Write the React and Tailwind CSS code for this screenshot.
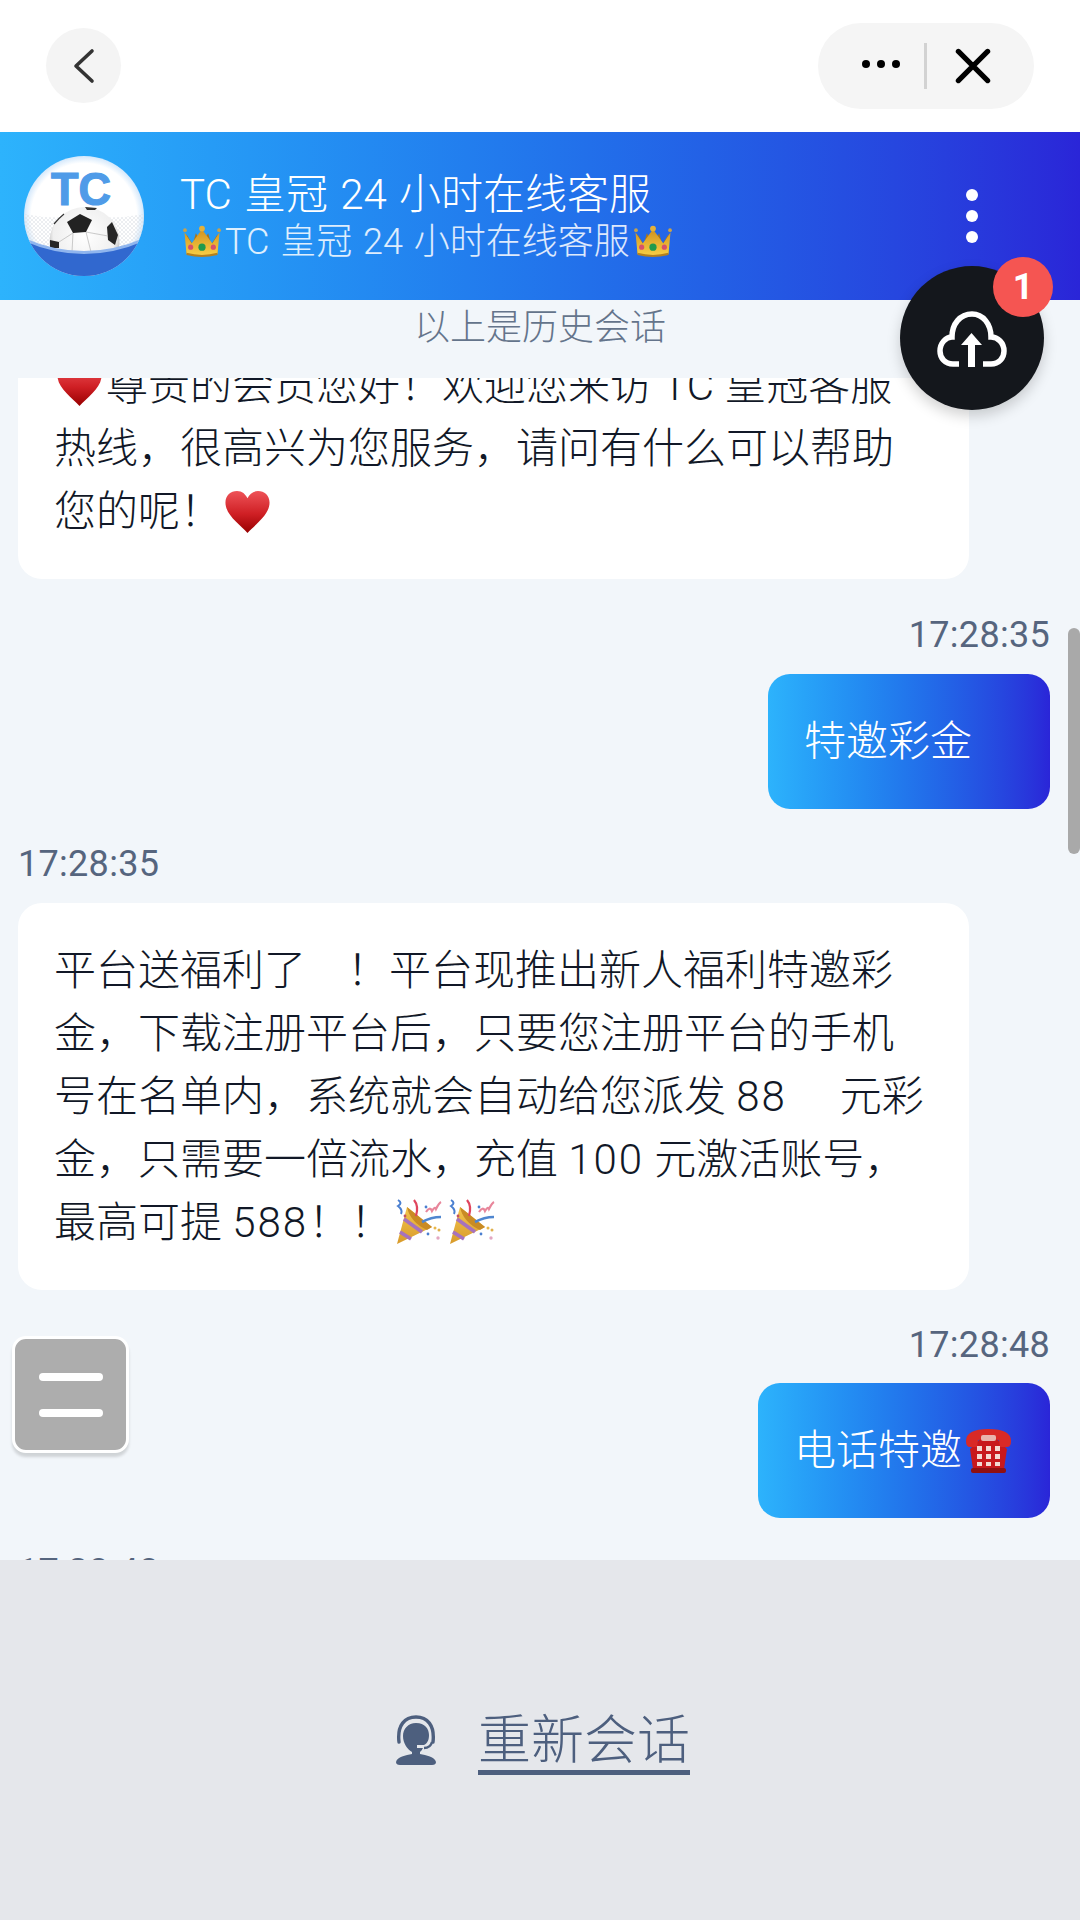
import React from 'react';

const FONT = '"Roboto", "Noto Sans CJK SC", sans-serif';

function Heart({ className }) {
  return (
    <svg viewBox="1 1 42 40" className={className}>
      <defs>
        <linearGradient id="heartFill" x1="0" y1="0" x2="0" y2="1">
          <stop offset="0" stopColor="#ee5358" />
          <stop offset="0.55" stopColor="#cf1f24" />
          <stop offset="1" stopColor="#980000" />
        </linearGradient>
      </defs>
      <path d="M22 41 C15 33 1 24 1 12 C1 5 6 1 12 1 C17 1 20 4 22 8 C24 4 27 1 32 1 C38 1 43 5 43 12 C43 24 29 33 22 41 Z" fill="url(#heartFill)" />
    </svg>
  );
}

function Crown({ className }) {
  return (
    <svg viewBox="1 0 36 32" className={className}>
      <defs>
        <linearGradient id="crownFill" x1="0" y1="0" x2="0" y2="1">
          <stop offset="0" stopColor="#d0911f" />
          <stop offset="1" stopColor="#f8cf45" />
        </linearGradient>
      </defs>
      <path d="M4 9 L10 19 L13 8 L19 17 L25 8 L28 19 L34 9 L34 27 L4 27 Z" fill="#a8751b" />
      <path d="M2 7 L9 18 L19 4 L29 18 L36 7 L34 28 Q19 32 4 28 Z" fill="url(#crownFill)" />
      <circle cx="19" cy="3.5" r="2.8" fill="#e5b13a" />
      <circle cx="2.5" cy="5" r="1.8" fill="#c9a24b" />
      <circle cx="35.5" cy="5" r="1.8" fill="#c9a24b" />
      <circle cx="19" cy="21.5" r="3.5" fill="#1f9a4d" />
      <circle cx="8" cy="21.5" r="2.5" fill="#d8506a" />
      <circle cx="30" cy="21.5" r="2.5" fill="#d8506a" />
      <path d="M4 27 Q19 31 34 27 L34 29 Q19 33 4 29 Z" fill="#b4801e" />
    </svg>
  );
}

function Popper({ className }) {
  return (
    <svg viewBox="0 0 47 47" className={className} fill="none">
      <defs>
        <linearGradient id="coneFill" x1="0" y1="0" x2="0" y2="1">
          <stop offset="0" stopColor="#f3c64e" />
          <stop offset="1" stopColor="#d89a2a" />
        </linearGradient>
      </defs>
      <path d="M2 45 L12 8 L37 28 Z" fill="url(#coneFill)" />
      <path d="M9 20 L27 33 M5 33 L16 40" stroke="#a672bd" strokeWidth="3.6" />
      <path d="M12 8 L37 28 L32 31 Q15 23 12 8 Z" fill="#c98b24" />
      <path d="M3 1 Q8 4 3 7 Q8 11 6 15" stroke="#4a7fd0" strokeWidth="2" />
      <path d="M19 1 Q24 7 21 17" stroke="#e0455d" strokeWidth="2.2" />
      <path d="M31 13 Q35 7 37 12 Q40 7 41 10 Q44 4 46 3" stroke="#e8869b" strokeWidth="2.2" />
      <path d="M27 23 Q36 18 46 18" stroke="#4f86cf" strokeWidth="2.6" />
      <circle cx="31" cy="8" r="1.4" fill="#4a7fd0" />
      <circle cx="10" cy="17" r="1.4" fill="#c7505f" />
      <circle cx="40" cy="29" r="1.5" fill="#e8b74a" />
      <circle cx="44" cy="31" r="1.5" fill="#e0b04d" />
      <circle cx="33" cy="35" r="1.4" fill="#4a7fd0" />
      <circle cx="43" cy="39" r="1.7" fill="#e3a7c2" />
    </svg>
  );
}

function Phone({ className }) {
  return (
    <svg viewBox="0 0 47 46" className={className}>
      <path d="M5 21 L8 41 Q8 45 12 45 L35 45 Q39 45 39 41 L42 21 L32 11 L15 11 Z" fill="#c8181c" />
      <path d="M1 13 Q1 1 23.5 1 Q46 1 46 13 Q46 19 42 19 L35 19 L34 12 Q23.5 9 13 12 L12 19 L5 19 Q1 19 1 13 Z" fill="#d92a26" />
      <rect x="16" y="7" width="15" height="6" rx="2" fill="#e8b5ae" />
      <rect x="6" y="40" width="35" height="5" rx="2" fill="#8f1012" />
      <g fill="#f3d9d2">
        <rect x="12" y="18" width="5" height="5" />
        <rect x="21" y="18" width="5" height="5" />
        <rect x="30" y="18" width="5" height="5" />
        <rect x="12" y="26" width="5" height="5" />
        <rect x="21" y="26" width="5" height="5" />
        <rect x="30" y="26" width="5" height="5" />
        <rect x="12" y="34" width="5" height="4" />
        <rect x="21" y="34" width="5" height="4" />
        <rect x="30" y="34" width="5" height="4" />
      </g>
    </svg>
  );
}

function Avatar() {
  return (
    <svg viewBox="0 0 120 120" className="w-[120px] h-[120px] shrink-0">
      <defs>
        <clipPath id="avatarClip">
          <circle cx="60" cy="60" r="60" />
        </clipPath>
        <radialGradient id="ballFill" cx="0.5" cy="0.4" r="0.62">
          <stop offset="0" stopColor="#ffffff" />
          <stop offset="0.72" stopColor="#efefef" />
          <stop offset="1" stopColor="#8f8f8f" />
        </radialGradient>
        <radialGradient id="rimFill" cx="0.5" cy="0.5" r="0.5">
          <stop offset="0.88" stopColor="#ffffff" />
          <stop offset="1" stopColor="#d4e8fb" />
        </radialGradient>
        <pattern id="netFill" width="4" height="4" patternUnits="userSpaceOnUse">
          <path d="M0 0 L4 4 M4 0 L0 4" stroke="#d8dde3" strokeWidth="0.5" />
        </pattern>
      </defs>
      <g clipPath="url(#avatarClip)">
        <rect width="120" height="120" fill="url(#rimFill)" />
        <path d="M0 58 Q30 64 60 60 Q90 64 120 58 L120 90 L0 90 Z" fill="url(#netFill)" />
        <text x="27" y="49" fontFamily='"Liberation Sans", sans-serif' fontWeight="700" fontSize="46" textLength="60" lengthAdjust="spacingAndGlyphs" fill="#4f9be8" stroke="#4f9be8" strokeWidth="1.2">TC</text>
        <circle cx="60.5" cy="86" r="35" fill="url(#ballFill)" />
        <path d="M43 66 L56 58 L68 64 L62 76 L49 77 Z" fill="#222222" />
        <path d="M83 71 L88 66 L94 79 L91 89 L84 84 Z" fill="#262626" />
        <path d="M26 84 L35 86 L35 92 L26 92 Z" fill="#262626" />
        <path d="M61 51 L73 52 L71 54 L63 54 Z" fill="#333333" />
        <path d="M30 68 Q35 62 40 58" stroke="#333333" strokeWidth="1.2" fill="none" />
        <path d="M49 77 L35 86 M62 76 L84 80 M62 76 L67 96 M49 77 L48 96" stroke="#b5b5b5" strokeWidth="0.7" fill="none" />
        <path d="M0 82 Q60 108 120 82 L120 120 L0 120 Z" fill="#8fb5ee" />
        <path d="M0 85 Q60 111 120 85 L120 120 L0 120 Z" fill="#3168cf" />
      </g>
    </svg>
  );
}

function CloudUp() {
  return (
    <svg viewBox="0 0 70 56" className="w-[70px] h-[56px]" fill="none">
      <path d="M22 53 H16 C8 53 3 47 3 40 C3 32 9 26 15 26 C15 13 23 3 35 3 C46 3 54 13 54 26 C61 26 67 32 67 40 C67 47 62 53 54 53 H46" stroke="#ffffff" strokeWidth="5.5" />
      <path d="M34.5 22 L45 34 L38 34 L38 56 L31 56 L31 34 L24 34 Z" fill="#ffffff" />
    </svg>
  );
}

function Agent() {
  return (
    <svg viewBox="0 0 40 50" className="w-[40px] h-[50px]" fill="none">
      <path d="M3 27 C1 10 9 2 20 2 C31 2 39 10 37 27" stroke="#4d5f7e" strokeWidth="3.4" strokeLinecap="round" />
      <path d="M20 8 C29 8 33 14 33 20 C33 24 32 28 28 30 L21 30 L21 33 L27 33 C26 35 25 36 24 37 L24 39 C30 40 39 42 40 47 Q40 50 36 50 L4 50 Q0 50 0 47 C1 42 10 40 16 39 L16 37 C11 34 7 28 7 21 C7 14 12 8 20 8 Z" fill="#4d5f7e" />
      <path d="M36 27 C35 31 32 33 28 33" stroke="#4d5f7e" strokeWidth="2.4" />
    </svg>
  );
}

function Time({ children, right }) {
  return (
    <div className={`h-[50px] leading-[52px] text-[36px] tracking-[0.3px] text-[#56657e] ${right ? 'text-right' : ''}`}>
      {children}
    </div>
  );
}

function Num({ children }) {
  return <span className="tracking-[2px]">{children}</span>;
}

function Incoming({ children }) {
  return (
    <div className="w-[951px] bg-white rounded-[24px] px-[36px] py-[36px] text-[42px] leading-[63px] text-[#111827] font-light whitespace-nowrap">
      {children}
    </div>
  );
}

function Outgoing({ children }) {
  return (
    <div className="flex justify-end">
      <div className="h-[135px] rounded-[22px] px-[36px] flex items-center text-[42px] text-white font-light whitespace-nowrap bg-gradient-to-r from-[#2db3fc] to-[#2a25d8]">
        {children}
      </div>
    </div>
  );
}

export default function App() {
  return (
    <div lang="zh-CN" className="relative w-[1080px] h-[1920px] overflow-hidden flex flex-col bg-[#f2f6fa]" style={{ fontFamily: FONT }}>
      {/* mini program top bar */}
      <div className="h-[132px] bg-white flex items-start justify-between pl-[46px] pr-[46px] pt-[23px] shrink-0">
        <div className="mt-[5px] w-[75px] h-[75px] rounded-full bg-[#f4f4f4] flex items-center justify-center">
          <svg viewBox="0 0 24 36" className="w-[24px] h-[36px]" fill="none">
            <path d="M20 3 L4 18 L20 33" stroke="#333333" strokeWidth="3.6" strokeLinecap="round" strokeLinejoin="round" />
          </svg>
        </div>
        <div className="w-[216px] h-[86px] rounded-full bg-[#f5f5f5] flex items-center pl-[44px]">
          <div className="flex gap-[7px] w-[38px] -mt-[4px]">
            <span className="w-[8px] h-[8px] rounded-full bg-black shrink-0" />
            <span className="w-[8px] h-[8px] rounded-full bg-black shrink-0" />
            <span className="w-[8px] h-[8px] rounded-full bg-black shrink-0" />
          </div>
          <div className="ml-[24px] w-[3px] h-[46px] bg-[#d2d2d2]" />
          <svg viewBox="0 0 32 32" className="ml-[28px] w-[36px] h-[36px] -mt-[1px]" fill="none">
            <path d="M3 3 L29 29 M29 3 L3 29" stroke="#000000" strokeWidth="4.6" strokeLinecap="round" />
          </svg>
        </div>
      </div>

      {/* service header */}
      <div className="h-[168px] shrink-0 flex items-center pl-[24px] bg-gradient-to-r from-[#2db3fc] to-[#2a25d8]">
        <Avatar />
        <div className="ml-[36px] mt-[3px] flex flex-col [word-spacing:2px]">
          <div className="text-[42px] leading-[48px] text-white font-light whitespace-nowrap">TC 皇冠 24 小时在线客服</div>
          <div className="text-[36px] leading-[46px] text-white/85 font-light whitespace-nowrap flex items-center">
            <Crown className="w-[38px] h-[33px] ml-[3px] mr-[4px]" />
            TC 皇冠 24 小时在线客服
            <Crown className="w-[38px] h-[33px] ml-[4px]" />
          </div>
        </div>
      </div>

      {/* chat */}
      <div className="flex-1 min-h-0 flex flex-col">
        <div className="h-[56px] leading-[56px] mb-[22px] shrink-0 text-center text-[36px] text-[#64748b] font-light">以上是历史会话</div>
        <div className="flex-1 min-h-0 overflow-hidden">
          <div className="-mt-[60px] pl-[18px] pr-[30px]">
            <Incoming>
              <Heart className="inline-block w-[45px] h-[42px] ml-[3px] mr-[4px] align-[-6px]" />
              尊贵的会员您好！欢迎您来访 TC 皇冠客服<br />
              热线，很高兴为您服务，请问有什么可以帮助<br />
              您的呢！<Heart className="inline-block w-[45px] h-[42px] ml-[3px] align-[-7px]" />
            </Incoming>
            <div className="mt-[30px] mb-[15px]"><Time right>17:28:35</Time></div>
            <Outgoing>特邀彩金<span className="inline-block w-[42px]" /></Outgoing>
            <div className="mt-[29px] mb-[15px]"><Time>17:28:35</Time></div>
            <Incoming>
              平台送福利了<span className="inline-block w-[41px]" />！平台现推出新人福利特邀彩<br />
              金，下载注册平台后，只要您注册平台的手机<br />
              号在名单内，系统就会自动给您派发 <Num>88</Num><span className="inline-block w-[53px]" />元彩<br />
              金，只需要一倍流水，充值 <Num>100</Num> 元激活账号，<br />
              最高可提 <Num>588</Num>！！<Popper className="inline-block w-[47px] h-[47px] ml-[3px] align-[-9px]" /><Popper className="inline-block w-[47px] h-[47px] ml-[6px] align-[-9px]" />
            </Incoming>
            <div className="mt-[29px] mb-[14px]"><Time right>17:28:48</Time></div>
            <Outgoing>电话特邀<Phone className="w-[47px] h-[46px] ml-[3px] mr-[2px]" /></Outgoing>
            <div className="mt-[28px]"><Time>17:28:48</Time></div>
          </div>
        </div>
      </div>

      {/* restart bar */}
      <div className="h-[360px] shrink-0 bg-[#e5e7eb] flex items-start justify-center pt-[155px] pl-[6px]">
        <Agent />
        <div className="ml-[42px] -mt-[16px] h-[76px] leading-[84px] text-[53px] font-light text-[#4d5f7e] border-b-[5px] border-[#4d5f7e]">重新会话</div>
      </div>

      {/* header menu dots */}
      <div className="absolute left-[966px] top-[189px] flex flex-col gap-[9px]">
        <span className="w-[12px] h-[12px] rounded-full bg-white" />
        <span className="w-[12px] h-[12px] rounded-full bg-white" />
        <span className="w-[12px] h-[12px] rounded-full bg-white" />
      </div>

      {/* floating upload */}
      <div className="absolute left-[900px] top-[266px] w-[144px] h-[144px] rounded-full bg-[#14171c] shadow-[0_6px_14px_rgba(0,0,0,0.18)] flex items-center justify-center">
        <div className="mt-[2px] ml-[-1px]"><CloudUp /></div>
        <div className="absolute left-[93px] top-[-9px] w-[60px] h-[60px] rounded-full bg-[#f55552] flex items-center justify-center text-white text-[36px] font-bold">1</div>
      </div>

      {/* floating menu */}
      <div className="absolute left-[12px] top-[1336px] w-[117px] h-[117px] rounded-[14px] bg-[#adadad] border-[3px] border-white shadow-[0_4px_3px_rgba(0,0,0,0.14)] flex flex-col items-center justify-center gap-[28px]">
        <span className="w-[64px] h-[8px] rounded-full bg-white" />
        <span className="w-[64px] h-[8px] rounded-full bg-white" />
      </div>

      {/* scrollbar */}
      <div className="absolute left-[1068px] top-[628px] w-[12px] h-[226px] rounded-full bg-[#a9a9a9]" />
    </div>
  );
}
